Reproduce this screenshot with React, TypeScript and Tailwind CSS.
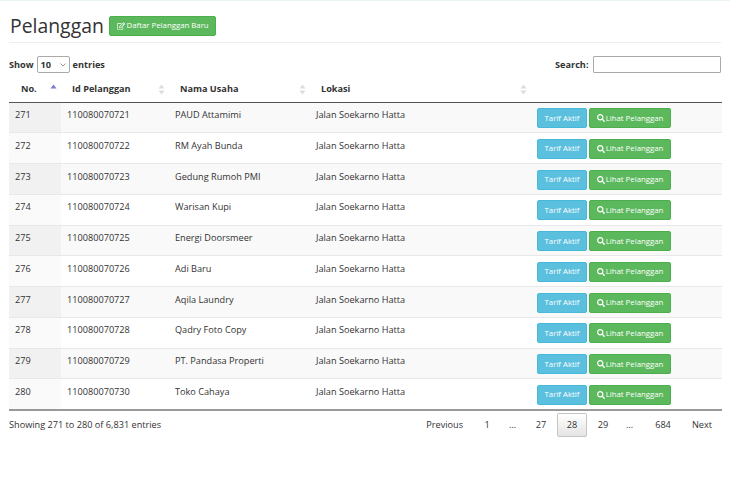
import { FaRegEdit, FaSearch } from "react-icons/fa";

const rows = [
  { no: 271, id: "110080070721", name: "PAUD Attamimi" },
  { no: 272, id: "110080070722", name: "RM Ayah Bunda" },
  { no: 273, id: "110080070723", name: "Gedung Rumoh PMI" },
  { no: 274, id: "110080070724", name: "Warisan Kupi" },
  { no: 275, id: "110080070725", name: "Energi Doorsmeer" },
  { no: 276, id: "110080070726", name: "Adi Baru" },
  { no: 277, id: "110080070727", name: "Aqila Laundry" },
  { no: 278, id: "110080070728", name: "Qadry Foto Copy" },
  { no: 279, id: "110080070729", name: "PT. Pandasa Properti" },
  { no: 280, id: "110080070730", name: "Toko Cahaya" },
];

const pages = [
  { label: "Previous", cls: "w-[58px] justify-end pr-[11px]" },
  { label: "1", cls: "w-[26px] justify-center" },
  { label: "…", cls: "w-[25px] justify-center" },
  { label: "27", cls: "w-[32px] justify-center" },
  { label: "28", cls: "w-[30px] justify-center rounded-[2px] border border-[#c4c4c4] bg-gradient-to-b from-white to-[#e4e4e4]" },
  { label: "29", cls: "w-[32px] justify-center" },
  { label: "…", cls: "w-[21px] justify-center" },
  { label: "684", cls: "w-[46px] justify-center" },
  { label: "Next", cls: "w-[35px] justify-end pr-[9px]" },
];

const SortIcon = ({ active }: { active?: boolean }) => (
  <svg width="7" height="11" viewBox="0 0 7 11" className="absolute right-[4px] top-[11px]">
    {active ? (
      <path d="M3.5 0.5 L6.5 4.5 H0.5 Z" fill="#7a7ad8" />
    ) : (
      <>
        <path d="M3.5 0.5 L6.5 4.5 H0.5 Z" fill="#dddddd" />
        <path d="M3.5 10.5 L6.5 6.5 H0.5 Z" fill="#dddddd" />
      </>
    )}
  </svg>
);

export default function App() {
  return (
    <div className="min-h-[486px] bg-white text-[9.17px] leading-[15px] text-[#333] font-['Open_Sans',sans-serif]">
      <div className="h-px bg-[#eaf5f0]" />
      <div className="px-[9px]">
        <div className="flex h-[42px] items-center gap-[5px] border-b border-[#eeeeee] pt-[8px]">
          <h1 className="pl-px text-[19.4px] leading-[30px] text-[#333]">Pelanggan</h1>
          <button className="flex h-[20px] w-[107.5px] items-center justify-center gap-[2px] rounded-[2px] border border-[#4cae4c] bg-[#5cb85c] text-[7.8px] text-white">
            <FaRegEdit size={8} />
            Daftar Pelanggan Baru
          </button>
        </div>

        <div className="flex items-center justify-between pt-[13px]">
          <div className="flex items-center gap-[2px] font-bold">
            Show
            <div className="relative mx-[1px]">
              <select className="block h-[17px] w-[33px] appearance-none rounded-[2px] border border-[#aaaaaa] bg-white pl-[3px] text-[9.17px] font-bold">
                <option>10</option>
              </select>
              <svg width="6" height="4" viewBox="0 0 6 4" className="absolute right-[4px] top-[7px]">
                <path d="M0.5 0.5 L3 3 L5.5 0.5" fill="none" stroke="#777777" strokeWidth="0.8" />
              </svg>
            </div>
            entries
          </div>
          <div className="flex items-center gap-[4px] font-bold">
            Search:
            <input className="h-[17px] w-[128.5px] rounded-[1px] border border-[#aaaaaa] bg-white" />
          </div>
        </div>

        <table className="w-[713px] table-fixed border-collapse">
          <thead>
            <tr className="h-[29px] border-b border-[#555555] text-left font-bold">
              <th className="relative w-[52px] pl-[12px] pt-[2px]">No.<SortIcon active /></th>
              <th className="relative w-[108px] pl-[11px] pt-[2px]">Id Pelanggan<SortIcon /></th>
              <th className="relative w-[141px] pl-[11px] pt-[2px]">Nama Usaha<SortIcon /></th>
              <th className="relative w-[221px] pl-[11px] pt-[2px]">Lokasi<SortIcon /></th>
              <th className="w-[191px]" />
            </tr>
          </thead>
          <tbody>
            {rows.map((row, i) => (
              <tr key={row.no} className={`h-[30.75px] border-b border-[#e8e8e8] last:border-b-2 last:border-[#999999] ${i % 2 === 0 ? "bg-[#f9f9f9]" : "bg-white"}`}>
                <td className={`pl-[6px] align-top pt-[4.5px] ${i % 2 === 0 ? "bg-[#f1f1f1]" : "bg-[#fafafa]"}`}>{row.no}</td>
                <td className="pl-[6px] align-top pt-[4.5px]">{row.id}</td>
                <td className="pl-[6px] align-top pt-[4.5px]">{row.name}</td>
                <td className="pl-[6px] align-top pt-[4.5px]">Jalan Soekarno Hatta</td>
                <td className="pl-[6px] align-top pt-[5.5px]">
                  <div className="flex gap-[2px] text-[7.8px] text-white">
                    <button className="h-[20px] w-[50px] rounded-[2px] border border-[#46b8da] bg-[#5bc0de]">Tarif Aktif</button>
                    <button className="flex h-[20px] w-[82px] items-center justify-center gap-[1px] rounded-[2px] border border-[#4cae4c] bg-[#5cb85c]">
                      <FaSearch size={8} />
                      Lihat Pelanggan
                    </button>
                  </div>
                </td>
              </tr>
            ))}
          </tbody>
        </table>

        <div className="flex items-start justify-between">
          <div className="pt-[6px]">Showing 271 to 280 of 6,831 entries</div>
          <div className="flex pt-[2px]">
            {pages.map((page, i) => (
              <button key={i} className={`flex h-[24px] items-center ${page.cls}`}>
                {page.label}
              </button>
            ))}
          </div>
        </div>
      </div>
    </div>
  );
}
